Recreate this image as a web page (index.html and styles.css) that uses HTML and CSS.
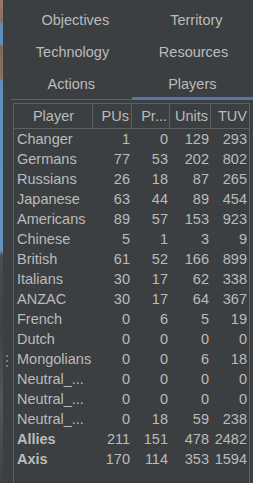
FILE: index.html
```html
<!DOCTYPE html>
<html>
<head>
<meta charset="utf-8">
<link rel="stylesheet" href="styles.css">
</head>
<body>
<div class="map"></div>
<div class="divider"><span class="dot"></span><span class="dot"></span><span class="dot"></span></div>
<div class="panel">
  <div class="tabs">
    <div class="tab-row"><div class="tab">Objectives</div><div class="tab">Territory</div></div>
    <div class="tab-row"><div class="tab">Technology</div><div class="tab">Resources</div></div>
    <div class="tab-row"><div class="tab">Actions</div><div class="tab selected">Players</div></div>
  </div>
  <div class="content">
    <div class="scroll">
      <div class="row head">
        <div class="c">Player</div><div class="c num">PUs</div><div class="c num">Pr...</div><div class="c num">Units</div><div class="c num">TUV</div>
      </div>
      <div class="row"><div class="c">Changer</div><div class="c num">1</div><div class="c num">0</div><div class="c num">129</div><div class="c num">293</div></div>
      <div class="row"><div class="c">Germans</div><div class="c num">77</div><div class="c num">53</div><div class="c num">202</div><div class="c num">802</div></div>
      <div class="row"><div class="c">Russians</div><div class="c num">26</div><div class="c num">18</div><div class="c num">87</div><div class="c num">265</div></div>
      <div class="row"><div class="c">Japanese</div><div class="c num">63</div><div class="c num">44</div><div class="c num">89</div><div class="c num">454</div></div>
      <div class="row"><div class="c">Americans</div><div class="c num">89</div><div class="c num">57</div><div class="c num">153</div><div class="c num">923</div></div>
      <div class="row"><div class="c">Chinese</div><div class="c num">5</div><div class="c num">1</div><div class="c num">3</div><div class="c num">9</div></div>
      <div class="row"><div class="c">British</div><div class="c num">61</div><div class="c num">52</div><div class="c num">166</div><div class="c num">899</div></div>
      <div class="row"><div class="c">Italians</div><div class="c num">30</div><div class="c num">17</div><div class="c num">62</div><div class="c num">338</div></div>
      <div class="row"><div class="c">ANZAC</div><div class="c num">30</div><div class="c num">17</div><div class="c num">64</div><div class="c num">367</div></div>
      <div class="row"><div class="c">French</div><div class="c num">0</div><div class="c num">6</div><div class="c num">5</div><div class="c num">19</div></div>
      <div class="row"><div class="c">Dutch</div><div class="c num">0</div><div class="c num">0</div><div class="c num">0</div><div class="c num">0</div></div>
      <div class="row"><div class="c">Mongolians</div><div class="c num">0</div><div class="c num">0</div><div class="c num">6</div><div class="c num">18</div></div>
      <div class="row"><div class="c">Neutral_...</div><div class="c num">0</div><div class="c num">0</div><div class="c num">0</div><div class="c num">0</div></div>
      <div class="row"><div class="c">Neutral_...</div><div class="c num">0</div><div class="c num">0</div><div class="c num">0</div><div class="c num">0</div></div>
      <div class="row"><div class="c">Neutral_...</div><div class="c num">0</div><div class="c num">18</div><div class="c num">59</div><div class="c num">238</div></div>
      <div class="row"><div class="c bold">Allies</div><div class="c num">211</div><div class="c num">151</div><div class="c num">478</div><div class="c num">2482</div></div>
      <div class="row"><div class="c bold">Axis</div><div class="c num">170</div><div class="c num">114</div><div class="c num">353</div><div class="c num">1594</div></div>
    </div>
  </div>
</div>
</body>
</html>
```
FILE: styles.css
```css
html, body {
  margin: 0;
  padding: 0;
}
body {
  width: 253px;
  height: 483px;
  overflow: hidden;
  display: flex;
  background: #3c3f41;
  color: #bbbbbb;
  font-family: "Liberation Sans", Arial, sans-serif;
  font-size: 14.5px;
}
.map {
  width: 3px;
  flex: none;
  background: linear-gradient(to bottom,
    #9a7a66 0px, #8c6e5c 22px, #5f8fbd 24px, #5f8fbd 44px,
    #7d6a5c 46px, #8a7060 78px, #5f8fbd 82px, #6793bf 250px,
    #4a4c4e 256px, #3f4143 330px, #555555 400px, #3f4143 483px);
}
.divider {
  width: 8px;
  flex: none;
  display: flex;
  flex-direction: column;
  align-items: center;
  justify-content: flex-start;
  padding-top: 355px;
  box-sizing: border-box;
  gap: 3px;
}
.dot {
  width: 2px;
  height: 2px;
  background: #8e9193;
  border-radius: 1px;
}
.panel {
  flex: 1;
  display: flex;
  flex-direction: column;
  min-width: 0;
}
.tabs {
  padding-top: 4px;
  border-bottom: 1px solid #5e6163;
}
.tab-row {
  display: flex;
  height: 32px;
}
.tab-row:last-child {
  height: 31px;
}
.tab {
  flex: 1 1 auto;
  text-align: center;
  line-height: 32px;
  white-space: nowrap;
  position: relative;
}
.tab.selected::after {
  content: "";
  position: absolute;
  left: 0;
  right: 0;
  bottom: -1px;
  height: 3px;
  background: #4f78a6;
}
.content {
  flex: 1;
  display: flex;
  flex-direction: column;
  padding: 3px 3px 0 2px;
  min-height: 0;
}
.scroll {
  flex: 1;
  border: 1px solid #5e6163;
  border-bottom: none;
}
.row {
  display: grid;
  grid-template-columns: 79px 39px 38px 41px 38px;
  height: 20px;
  line-height: 20px;
}
.row.head {
  height: 25px;
  line-height: 24px;
  border-bottom: 1px solid #5e6163;
  box-sizing: border-box;
}
.row.head .c {
  border-right: 1px solid #5e6163;
  text-align: center;
}
.row.head .c.num {
  text-align: right;
  padding-right: 2px;
}
.row.head .c:last-child {
  border-right: none;
}
.c {
  box-sizing: border-box;
  padding: 0 2px 0 3px;
  white-space: nowrap;
  overflow: hidden;
}
.c.num {
  text-align: right;
  padding-right: 2px;
}
.bold {
  font-weight: bold;
}
```
